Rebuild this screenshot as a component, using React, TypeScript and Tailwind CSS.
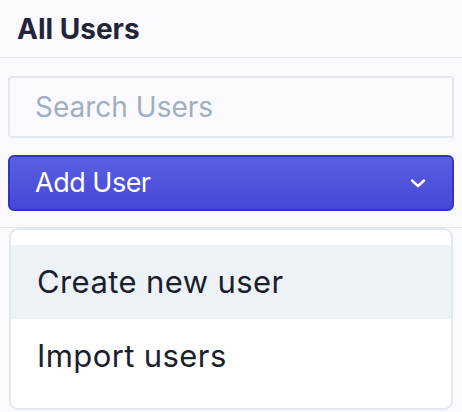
import { useState } from 'react';

export default function App() {
  const [query, setQuery] = useState('');

  return (
    <div className="w-[462px] h-[412px] overflow-hidden bg-[#fafafe] font-['Inter',sans-serif]">
      {/* Header */}
      <div className="h-[58px] px-[17px] flex items-center border-b border-[#e2e8f0]">
        <h1 className="text-[28px] leading-none font-bold text-[#23233a]">All Users</h1>
      </div>

      <div className="px-2 pt-[18px] pb-[16px]">
        <input
          type="text"
          value={query}
          onChange={(e) => setQuery(e.target.value)}
          placeholder="Search Users"
          className="w-full h-[62px] px-[25px] bg-[#fafafe] border-2 border-[#e2e8f0] rounded-[4px] text-[28px] text-[#1a202c] outline-none placeholder:text-[#a0aec0]"
        />

        <button
          type="button"
          className="mt-[17px] w-full h-[56px] pl-[25px] pr-[26px] flex items-center justify-between bg-gradient-to-b from-[#5a5ee3] to-[#4747d6] border-2 border-[#3434bf] rounded-[6px] text-white text-[27px] tracking-[-0.5px]"
        >
          <span>Add User</span>
          <svg width="16" height="10" viewBox="0 0 16 10" fill="none">
            <path d="M2 2.5l6 5.5 6-5.5" stroke="white" strokeWidth="2.4" strokeLinecap="round" strokeLinejoin="round" />
          </svg>
        </button>
      </div>

      {/* Dropdown menu */}
      <div className="border-t border-[#e2e8f0] px-[9px]">
        <div className="w-full bg-white border-2 border-[#e2e8f0] rounded-[9px] py-[15px]">
          <div className="h-[74px] pl-[26px] flex items-center bg-[#edf2f7] text-[31px] tracking-[0.4px] text-[#1a202c]">
            Create new user
          </div>
          <div className="h-[74px] pl-[26px] flex items-center text-[31px] tracking-[0.4px] text-[#1a202c]">
            Import users
          </div>
        </div>
      </div>
    </div>
  );
}
